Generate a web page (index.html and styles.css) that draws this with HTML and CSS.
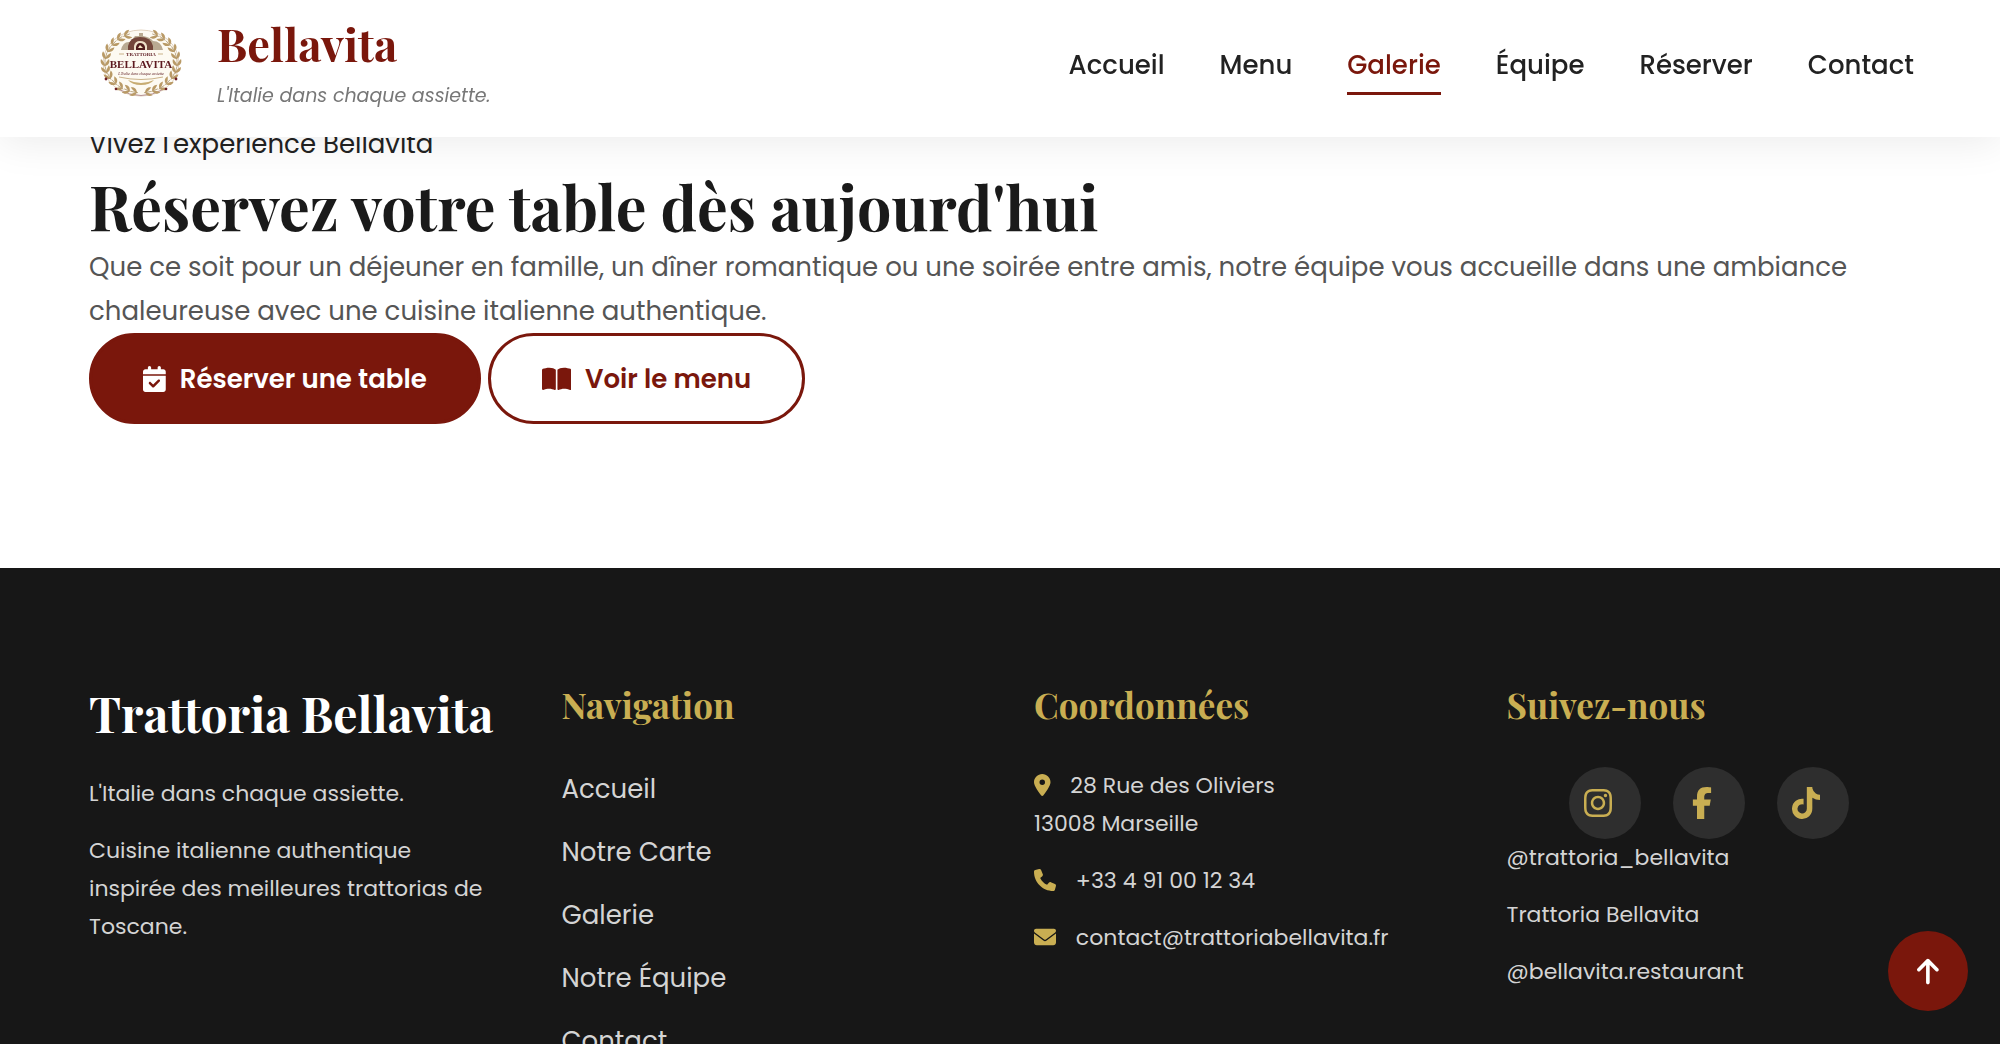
FILE: index.html
```
<!DOCTYPE html>
<html lang="fr">
<head>
    <meta charset="UTF-8">
    <meta name="viewport" content="width=device-width, initial-scale=1.0">
    <title>Trattoria Bellavita - Galerie</title>
    <link rel="stylesheet" href="styles.css">
</head>
<body>
    <header class="header">
        <a href="#" class="logo">
            <svg class="logo-img" viewBox="0 0 80 68" role="img" aria-label="Trattoria Bellavita">
                <defs>
                    <g id="leaf" fill="#b99a66">
                        <path d="M0 3C-4 2-5-1-4-4C-2-2 0 0 0 3Z"/>
                        <path d="M0 3C4 2 5-1 4-4C2-2 0 0 0 3Z"/>
                        <path d="M0 4V-3" stroke="#9a7b4a" stroke-width=".6"/>
                    </g>
                    <g id="branch">
                        <use href="#leaf" transform="translate(33 63) rotate(-80)"/>
                        <use href="#leaf" transform="translate(26 61) rotate(-68)"/>
                        <use href="#leaf" transform="translate(19 58) rotate(-55)"/>
                        <use href="#leaf" transform="translate(13 53) rotate(-42)"/>
                        <use href="#leaf" transform="translate(8 47) rotate(-28)"/>
                        <use href="#leaf" transform="translate(5 41) rotate(-14)"/>
                        <use href="#leaf" transform="translate(4 34)"/>
                        <use href="#leaf" transform="translate(5 27) rotate(14)"/>
                        <use href="#leaf" transform="translate(8 20) rotate(28)"/>
                        <use href="#leaf" transform="translate(13 14) rotate(42)"/>
                        <use href="#leaf" transform="translate(19 9) rotate(55)"/>
                        <use href="#leaf" transform="translate(26 6) rotate(68)"/>
                        <circle cx="5" cy="50" r="1.4" fill="#6d1f25"/>
                        <circle cx="15" cy="60" r="1.3" fill="#6d1f25"/>
                    </g>
                </defs>
                <ellipse cx="40" cy="34" rx="38" ry="33" fill="#fdfaf2" stroke="#d9c6ae" stroke-width=".8"/>
                <path d="M17 60Q40 73 63 60" fill="none" stroke="#a87c84" stroke-width=".8"/>
                <use href="#branch"/>
                <use href="#branch" transform="translate(80 0) scale(-1 1)"/>
                <path d="M20 21Q22 12 29 13L34 7H38V4H42V7Q49 8 52 12Q60 12 62 21Z" fill="#b9aa92"/>
                <path d="M27 21V17Q29 8 39 8Q50 8 52 17V21Z" fill="#73463a"/>
                <path d="M33 21V17Q34 12 39 12Q45 12 46 17V21Z" fill="#eee0c8"/>
                <path d="M35 21V18Q36 14 39 14Q43 14 44 18V21Z" fill="#4f1c1c"/>
                <path d="M37 19L39 16L42 19Z" fill="#f7e7c2"/>
                <path d="M18 25H23M57 25H62M18 48Q40 53 62 48" stroke="#b3925c" stroke-width=".7" fill="none"/>
                <path d="M27 51Q40 57 53 51Q49 56 40 56Q31 56 27 51Z" fill="#c7ac72"/>
                <text x="40" y="27" class="logo-small">TRATTORIA</text>
                <text x="40" y="39" class="logo-big">BELLAVITA</text>
                <text x="40" y="46" class="logo-script">L'Italie dans chaque assiette</text>
            </svg>
            <span class="logo-text">
                <span class="logo-name">Bellavita</span>
                <span class="logo-tagline">L'Italie dans chaque assiette.</span>
            </span>
        </a>
        <nav class="nav">
            <a href="#">Accueil</a>
            <a href="#">Menu</a>
            <a href="#" class="active">Galerie</a>
            <a href="#">Équipe</a>
            <a href="#">Réserver</a>
            <a href="#">Contact</a>
        </nav>
    </header>

    <main>
        <section class="cta">
            <span class="cta-label">Vivez l'expérience Bellavita</span>
            <h2>Réservez votre table dès aujourd'hui</h2>
            <p>Que ce soit pour un déjeuner en famille, un dîner romantique ou une soirée entre amis, notre équipe vous accueille dans une ambiance chaleureuse avec une cuisine italienne authentique.</p>
            <div class="cta-buttons">
                <a href="#" class="btn btn-primary">
                    <svg class="icon" viewBox="0 0 448 512"><path d="M128 0c17.700 0 32 14.300 32 32v32h128V32c0-17.700 14.300-32 32-32s32 14.300 32 32v32h48c26.500 0 48 21.500 48 48v48H0v-48c0-26.500 21.500-48 48-48h48V32c0-17.700 14.300-32 32-32zM0 192h448v272c0 26.500-21.500 48-48 48H48c-26.500 0-48-21.500-48-48V192zm329 113c9.400-9.400 9.400-24.600 0-33.900s-24.600-9.400-33.900 0l-95 95-47-47c-9.400-9.400-24.600-9.400-33.900 0s-9.400 24.600 0 33.900l64 64c9.400 9.400 24.600 9.400 33.900 0L329 305z"/></svg>
                    Réserver une table
                </a>
                <a href="#" class="btn btn-outline">
                    <svg class="icon" viewBox="0 0 576 512"><path d="M249.600 471.500c10.800 3.800 22.400-4.100 22.400-15.500V78.600c0-4.200-1.600-8.400-5-11C247.400 52 202.400 32 144 32 93.500 32 46.300 45.300 18.100 56.100 6.800 60.500 0 71.700 0 83.800v370.300c0 11.900 12.800 20.200 24.100 16.500C55.600 460.100 105.500 448 144 448c33.900 0 79 14 105.600 23.500zm76.800 0C353 462 398.100 448 432 448c38.500 0 88.400 12.100 119.900 22.600 11.300 3.800 24.100-4.600 24.100-16.500V83.800c0-12.100-6.800-23.300-18.100-27.600C529.700 45.300 482.500 32 432 32c-58.400 0-103.400 20-123 35.600-3.300 2.600-5 6.800-5 11V456c0 11.400 11.700 19.300 22.400 15.500z"/></svg>
                    Voir le menu
                </a>
            </div>
        </section>
    </main>

    <footer class="footer">
        <div class="footer-about">
            <h2>Trattoria Bellavita</h2>
            <p>L'Italie dans chaque assiette.</p>
            <p>Cuisine italienne authentique inspirée des meilleures trattorias de Toscane.</p>
        </div>
        <div>
            <h3>Navigation</h3>
            <ul class="footer-links">
                <li><a href="#">Accueil</a></li>
                <li><a href="#">Notre Carte</a></li>
                <li><a href="#">Galerie</a></li>
                <li><a href="#">Notre Équipe</a></li>
                <li><a href="#">Contact</a></li>
            </ul>
        </div>
        <div>
            <h3>Coordonnées</h3>
            <p>
                <svg class="icon" viewBox="0 0 384 512"><path d="M215.700 499.200C267 435 384 279.400 384 192 384 86 298 0 192 0S0 86 0 192c0 87.400 117 243 168.300 307.200 12.300 15.300 35.100 15.300 47.400 0zM192 128a64 64 0 1 1 0 128 64 64 0 1 1 0-128z"/></svg>
                28 Rue des Oliviers<br>
                13008 Marseille
            </p>
            <p>
                <svg class="icon" viewBox="0 0 512 512"><path d="M164.900 24.600c-7.700-18.600-28-28.500-47.400-23.200l-88 24C12.100 30.200 0 46 0 64c0 247.400 200.600 448 448 448 18 0 33.800-12.100 38.600-29.500l24-88c5.300-19.400-4.600-39.700-23.200-47.400l-96-40c-16.300-6.800-35.200-2.100-46.300 11.600L304.700 368C234.300 334.700 177.300 277.700 144 207.300l49.300-40.300c13.700-11.200 18.400-30 11.600-46.300l-40-96z"/></svg>
                +33 4 91 00 12 34
            </p>
            <p>
                <svg class="icon" viewBox="0 0 512 512"><path d="M48 64C21.500 64 0 85.500 0 112c0 15.100 7.100 29.300 19.200 38.400l217.600 163.200c11.400 8.500 27 8.500 38.400 0l217.600-163.200c12.100-9.100 19.200-23.300 19.200-38.400 0-26.500-21.500-48-48-48H48zM0 176v208c0 35.300 28.700 64 64 64h384c35.300 0 64-28.700 64-64V176L294.400 339.200c-22.800 17.100-54 17.100-76.800 0L0 176z"/></svg>
                contact@trattoriabellavita.fr
            </p>
        </div>
        <div>
            <h3>Suivez-nous</h3>
            <div class="socials">
                <a href="#" aria-label="Instagram"><svg class="icon" viewBox="0 0 448 512"><path d="M224.100 141c-63.600 0-114.900 51.300-114.900 114.900s51.300 114.900 114.900 114.900S339 319.500 339 255.900 287.700 141 224.100 141zm0 189.600c-41.100 0-74.700-33.500-74.700-74.700s33.500-74.700 74.700-74.700 74.700 33.500 74.700 74.700-33.600 74.700-74.700 74.700zm146.400-194.300c0 14.900-12 26.800-26.800 26.800-14.900 0-26.800-12-26.800-26.800s12-26.800 26.800-26.800 26.800 12 26.800 26.800zm76.100 27.200c-1.700-35.900-9.900-67.700-36.200-93.900-26.200-26.200-58-34.400-93.900-36.200-37-2.100-147.900-2.100-184.900 0-35.800 1.700-67.600 9.900-93.900 36.100s-34.400 58-36.200 93.900c-2.100 37-2.100 147.900 0 184.900 1.700 35.900 9.900 67.700 36.200 93.900s58 34.400 93.900 36.200c37 2.100 147.900 2.100 184.900 0 35.900-1.700 67.700-9.900 93.900-36.200 26.200-26.200 34.400-58 36.200-93.900 2.100-37 2.100-147.800 0-184.800zM398.800 388c-7.800 19.600-22.900 34.700-42.600 42.600-29.500 11.700-99.500 9-132.100 9s-102.700 2.600-132.100-9c-19.600-7.800-34.700-22.900-42.600-42.600-11.700-29.500-9-99.500-9-132.100s-2.600-102.700 9-132.100c7.800-19.600 22.900-34.700 42.600-42.600 29.500-11.700 99.500-9 132.100-9s102.700-2.600 132.100 9c19.600 7.800 34.700 22.900 42.600 42.600 11.700 29.500 9 99.500 9 132.100s2.700 102.700-9 132.100z"/></svg></a>
                <a href="#" aria-label="Facebook"><svg class="icon" viewBox="0 0 320 512"><path d="M80 299.300V512h116V299.300h86.500l18-97.800H196v-34.600c0-51.700 20.300-71.500 72.700-71.500 16.300 0 29.400.4 37 1.200V7.900C291.400 4 256.400 0 236.200 0 129.300 0 80 50.500 80 159.400v42.100H14v97.800h66z"/></svg></a>
                <a href="#" aria-label="TikTok"><svg class="icon" viewBox="0 0 448 512"><path d="M448 209.900a210.100 210.100 0 0 1-122.800-39.300v178.800A162.600 162.600 0 1 1 185 188.300v89.900a74.600 74.600 0 1 0 52.200 71.200V0h88a121.200 121.200 0 0 0 1.900 22.200 122.200 122.200 0 0 0 53.900 80.200 121.400 121.400 0 0 0 67 20.100z"/></svg></a>
            </div>
            <p>@trattoria_bellavita</p>
            <p>Trattoria Bellavita</p>
            <p>@bellavita.restaurant</p>
        </div>
    </footer>

    <button class="back-to-top" aria-label="Retour en haut">
        <svg viewBox="0 0 384 512"><path d="M214.600 41.400c-12.500-12.500-32.800-12.500-45.300 0l-160 160c-12.500 12.500-12.500 32.800 0 45.300s32.800 12.500 45.300 0L160 141.200V448c0 17.700 14.300 32 32 32s32-14.300 32-32V141.200l105.400 105.400c12.500 12.500 32.800 12.500 45.300 0s12.500-32.800 0-45.300l-160-160z"/></svg>
    </button>
</body>
</html>
```

FILE: styles.css
```
* {
    margin: 0;
    padding: 0;
    box-sizing: border-box;
}

html, body {
    height: 100%;
    overflow: hidden;
}

body {
    font-family: Poppins, Inter, sans-serif;
    font-size: 26px;
    line-height: 44px;
    color: #222;
    background: #fff;
}

a {
    text-decoration: none;
    color: inherit;
}

h2, h3, .logo-name {
    font-family: "Playfair Display", "Liberation Serif", serif;
    font-weight: 700;
}

.icon {
    height: 1em;
    margin-right: 14px;
    fill: currentColor;
    vertical-align: -3px;
}

/* Header */
.header {
    position: fixed;
    top: 0;
    left: 0;
    right: 0;
    z-index: 10;
    display: flex;
    justify-content: space-between;
    align-items: center;
    height: 137px;
    padding: 0 86px 0 89px;
    background: #fff;
    box-shadow: 0 6px 38px rgba(0, 0, 0, 0.08);
}

.logo {
    display: flex;
    align-items: center;
    gap: 24px;
}

.logo-img {
    width: 104px;
    height: 68px;
    margin-bottom: 12px;
}

.logo-small,
.logo-big,
.logo-script {
    font-family: "Liberation Serif", serif;
    font-weight: 700;
    text-anchor: middle;
    fill: #5d1a20;
}

.logo-small {
    font-size: 5px;
}

.logo-big {
    font-size: 11px;
}

.logo-script {
    font-size: 4px;
    font-style: italic;
    font-weight: 400;
}

.logo-text {
    display: flex;
    flex-direction: column;
}

.logo-name {
    font-size: 45px;
    line-height: 54px;
    color: #7a170c;
}

.logo-tagline {
    font-size: 19px;
    line-height: 52px;
    font-style: italic;
    color: #777;
}

.nav {
    display: flex;
    gap: 55px;
}

.nav a {
    padding: 1px 0 5px;
    border-bottom: 3px solid transparent;
    font-weight: 500;
}

.nav a.active {
    color: #7a170c;
    border-color: #7a170c;
}

/* Reservation */
.cta {
    padding: 122px 89px 144px;
}

.cta-label {
    display: block;
}

.cta h2 {
    font-size: 61px;
    line-height: 79px;
    color: #1a1a1a;
}

.cta p {
    color: #555;
}

.cta-buttons {
    display: flex;
    gap: 7px;
}

.btn {
    display: flex;
    align-items: center;
    height: 91px;
    padding: 0 51px;
    border: 3px solid #7a170c;
    border-radius: 46px;
    font-weight: 600;
}

.btn-primary {
    background: #7a170c;
    color: #fff;
}

.btn-outline {
    color: #7a170c;
}

/* Footer */
.footer {
    display: grid;
    grid-template-columns: repeat(4, minmax(0, 1fr));
    gap: 68px;
    padding: 114px 89px 60px;
    background: #171717;
    color: #d4d4d4;
    font-size: 22px;
    line-height: 38px;
}

.footer h2 {
    margin-bottom: 31px;
    font-size: 48px;
    line-height: 62px;
    color: #fff;
    white-space: nowrap;
}

.footer h3 {
    margin-bottom: 39px;
    font-size: 35px;
    line-height: 46px;
    color: #c9ae52;
}

.footer p {
    margin-bottom: 19px;
}

.footer p .icon {
    color: #c9ae52;
}

.footer-links {
    list-style: none;
    font-size: 26px;
    line-height: 44px;
}

.footer-links li {
    margin-bottom: 19px;
}

.socials {
    display: flex;
    justify-content: center;
    gap: 32px;
}

.socials a {
    display: flex;
    align-items: center;
    justify-content: center;
    width: 72px;
    height: 72px;
    border-radius: 50%;
    background: #2e2e2e;
    color: #c9ae52;
    font-size: 32px;
}

.back-to-top {
    position: fixed;
    right: 32px;
    bottom: 33px;
    display: flex;
    align-items: center;
    justify-content: center;
    width: 80px;
    height: 80px;
    border: none;
    border-radius: 50%;
    background: #7a170c;
    cursor: pointer;
}

.back-to-top svg {
    height: 29px;
    fill: #fff;
}
```
